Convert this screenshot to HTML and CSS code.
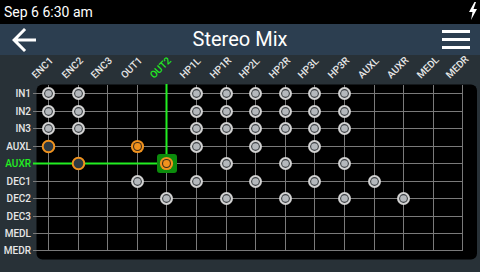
FILE: index.html
```html
<!DOCTYPE html>
<html>
<head>
<meta charset="utf-8">
<link rel="stylesheet" href="styles.css">
</head>
<body>
<div class="screen">
  <div class="status">
    <span class="clock">Sep 6 6:30 am</span>
    <svg class="bolt" viewBox="0 0 10 18" width="10" height="18"><polygon points="6.5,0 1,10 4.5,10 3,18 9,7 5.5,7 8,0" fill="#fff"/></svg>
  </div>
  <header class="topbar">
    <svg class="back" viewBox="4 4 16 16" width="24" height="24"><path d="M20 11H7.83l5.59-5.59L12 4l-8 8 8 8 1.41-1.41L7.83 13H20v-2z" fill="#fff"/></svg>
    <h1 class="title">Stereo Mix</h1>
    <div class="menu"><span></span><span></span><span></span></div>
  </header>
  <main class="content">
    <svg class="matrix" width="480" height="217" viewBox="0 55 480 217">
      <defs>
        <g id="dot">
          <circle r="6.5" class="d-out"/>
          <circle r="4.4" class="d-ring"/>
          <circle r="3.3" class="d-in"/>
        </g>
        <g id="ohollow">
          <circle r="5.8" class="o-hollow"/>
        </g>
        <g id="ofill">
          <circle r="6.6" class="o-out"/>
          <circle r="4.5" class="o-ring"/>
          <circle r="3.4" class="o-in"/>
        </g>
      </defs>
      <rect class="panel" x="36.5" y="84.5" width="440.5" height="175" rx="6"/>
      <g class="vlines">
        <line x1="48.5" y1="85" x2="48.5" y2="251"/>
        <line x1="78.5" y1="85" x2="78.5" y2="251"/>
        <line x1="107.5" y1="85" x2="107.5" y2="251"/>
        <line x1="137.5" y1="85" x2="137.5" y2="251"/>
        <line x1="166.5" y1="85" x2="166.5" y2="251"/>
        <line x1="196.5" y1="85" x2="196.5" y2="251"/>
        <line x1="226.5" y1="85" x2="226.5" y2="251"/>
        <line x1="255.5" y1="85" x2="255.5" y2="251"/>
        <line x1="285.5" y1="85" x2="285.5" y2="251"/>
        <line x1="314.5" y1="85" x2="314.5" y2="251"/>
        <line x1="344.5" y1="85" x2="344.5" y2="251"/>
        <line x1="374.5" y1="85" x2="374.5" y2="251"/>
        <line x1="403.5" y1="85" x2="403.5" y2="251"/>
        <line x1="433.5" y1="85" x2="433.5" y2="251"/>
        <line x1="462.5" y1="85" x2="462.5" y2="251"/>
      </g>
      <g class="hlines">
        <line x1="33" y1="93.5" x2="463" y2="93.5"/>
        <line x1="33" y1="111.5" x2="463" y2="111.5"/>
        <line x1="33" y1="128.5" x2="463" y2="128.5"/>
        <line x1="33" y1="146.5" x2="463" y2="146.5"/>
        <line x1="33" y1="163.5" x2="463" y2="163.5"/>
        <line x1="33" y1="181.5" x2="463" y2="181.5"/>
        <line x1="33" y1="198.5" x2="463" y2="198.5"/>
        <line x1="33" y1="216.5" x2="463" y2="216.5"/>
        <line x1="33" y1="233.5" x2="463" y2="233.5"/>
        <line x1="33" y1="250.5" x2="463" y2="250.5"/>
      </g>
      <line class="sel" x1="166.5" y1="84" x2="166.5" y2="155"/>
      <line class="sel" x1="33" y1="163.5" x2="158" y2="163.5"/>

      <g class="collabels">
        <text x="36" y="79" transform="rotate(-45 36 79)">ENC1</text>
        <text x="66" y="79" transform="rotate(-45 66 79)">ENC2</text>
        <text x="95" y="79" transform="rotate(-45 95 79)">ENC3</text>
        <text x="125" y="79" transform="rotate(-45 125 79)">OUT1</text>
        <text class="on" x="154" y="79" transform="rotate(-45 154 79)">OUT2</text>
        <text x="184" y="79" transform="rotate(-45 184 79)">HP1L</text>
        <text x="214" y="79" transform="rotate(-45 214 79)">HP1R</text>
        <text x="243" y="79" transform="rotate(-45 243 79)">HP2L</text>
        <text x="273" y="79" transform="rotate(-45 273 79)">HP2R</text>
        <text x="302" y="79" transform="rotate(-45 302 79)">HP3L</text>
        <text x="332" y="79" transform="rotate(-45 332 79)">HP3R</text>
        <text x="362" y="79" transform="rotate(-45 362 79)">AUXL</text>
        <text x="391" y="79" transform="rotate(-45 391 79)">AUXR</text>
        <text x="421" y="79" transform="rotate(-45 421 79)">MEDL</text>
        <text x="450" y="79" transform="rotate(-45 450 79)">MEDR</text>
      </g>
      <g class="rowlabels">
        <text x="31" y="97">IN1</text>
        <text x="31" y="115">IN2</text>
        <text x="31" y="132">IN3</text>
        <text x="31" y="150">AUXL</text>
        <text class="on" x="31" y="167">AUXR</text>
        <text x="31" y="185">DEC1</text>
        <text x="31" y="202">DEC2</text>
        <text x="31" y="220">DEC3</text>
        <text x="31" y="237">MEDL</text>
        <text x="31" y="254">MEDR</text>
      </g>

      <!-- IN1 -->
      <use href="#dot" x="48.5" y="93.5"/><use href="#dot" x="78.5" y="93.5"/>
      <use href="#dot" x="196.5" y="93.5"/><use href="#dot" x="226.5" y="93.5"/>
      <use href="#dot" x="255.5" y="93.5"/><use href="#dot" x="285.5" y="93.5"/>
      <use href="#dot" x="314.5" y="93.5"/><use href="#dot" x="344.5" y="93.5"/>
      <!-- IN2 -->
      <use href="#dot" x="48.5" y="111.5"/><use href="#dot" x="78.5" y="111.5"/>
      <use href="#dot" x="196.5" y="111.5"/><use href="#dot" x="226.5" y="111.5"/>
      <use href="#dot" x="255.5" y="111.5"/><use href="#dot" x="285.5" y="111.5"/>
      <use href="#dot" x="314.5" y="111.5"/><use href="#dot" x="344.5" y="111.5"/>
      <!-- IN3 -->
      <use href="#dot" x="48.5" y="128.5"/><use href="#dot" x="78.5" y="128.5"/>
      <use href="#dot" x="196.5" y="128.5"/><use href="#dot" x="226.5" y="128.5"/>
      <use href="#dot" x="255.5" y="128.5"/><use href="#dot" x="285.5" y="128.5"/>
      <use href="#dot" x="314.5" y="128.5"/><use href="#dot" x="344.5" y="128.5"/>
      <!-- AUXL -->
      <use href="#ohollow" x="48.5" y="146.5"/>
      <use href="#ofill" x="137.5" y="146.5"/>
      <use href="#dot" x="196.5" y="146.5"/><use href="#dot" x="255.5" y="146.5"/>
      <use href="#dot" x="314.5" y="146.5"/>
      <!-- AUXR -->
      <use href="#ohollow" x="78.5" y="163.5"/>
      <rect class="hl" x="157" y="154" width="20" height="19" rx="3"/>
      <use href="#ofill" x="166.5" y="163.5"/>
      <use href="#dot" x="226.5" y="163.5"/><use href="#dot" x="285.5" y="163.5"/>
      <use href="#dot" x="344.5" y="163.5"/>
      <!-- DEC1 -->
      <use href="#dot" x="137.5" y="181.5"/><use href="#dot" x="196.5" y="181.5"/>
      <use href="#dot" x="255.5" y="181.5"/><use href="#dot" x="314.5" y="181.5"/>
      <use href="#dot" x="374.5" y="181.5"/>
      <!-- DEC2 -->
      <use href="#dot" x="166.5" y="198.5"/><use href="#dot" x="226.5" y="198.5"/>
      <use href="#dot" x="285.5" y="198.5"/><use href="#dot" x="344.5" y="198.5"/>
      <use href="#dot" x="403.5" y="198.5"/>
    </svg>
  </main>
</div>
</body>
</html>
```

FILE: styles.css
```css
html, body {
  margin: 0;
  padding: 0;
  background: #283137;
}
.screen {
  width: 480px;
  height: 272px;
  overflow: hidden;
  font-family: Roboto, "Liberation Sans", sans-serif;
  color: #fff;
}
.status {
  height: 24px;
  background: #000;
  display: flex;
  align-items: center;
  justify-content: space-between;
  padding: 0 2px 0 4px;
}
.clock {
  font-size: 14px;
  line-height: 24px;
}
.bolt {
  display: block;
  margin-top: -2px;
}
.topbar {
  height: 31px;
  background: #2c3e50;
  display: grid;
  grid-template-columns: 48px 1fr 48px;
  align-items: center;
}
.back {
  display: block;
  margin-left: 12px;
}
.title {
  margin: 0;
  text-align: center;
  font-size: 20px;
  font-weight: 400;
  line-height: 31px;
}
.menu {
  justify-self: end;
  margin-right: 10px;
  display: flex;
  flex-direction: column;
  gap: 5px;
}
.menu span {
  display: block;
  width: 28px;
  height: 3px;
  background: #fff;
}
.content {
  height: 217px;
}
.matrix {
  display: block;
}
.panel {
  fill: #000;
}
.vlines line, .hlines line {
  stroke: #7a7a7a;
  stroke-width: 1;
}
.sel {
  stroke: #22ee22;
  stroke-width: 2;
}
.collabels text, .rowlabels text {
  font-family: Roboto, "Liberation Sans", sans-serif;
  font-size: 10px;
  font-weight: 500;
  fill: #e6e6e6;
}
.rowlabels text {
  text-anchor: end;
}
.collabels text.on, .rowlabels text.on {
  fill: #22ee22;
}
.d-out { fill: #d2d2d2; }
.d-ring { fill: #3c4044; }
.d-in { fill: #b4b8bc; }
.o-hollow {
  fill: #2e3a44;
  stroke: #f0921e;
  stroke-width: 2;
}
.o-out { fill: #f0921e; }
.o-ring { fill: #3a2a18; }
.o-in { fill: #f0921e; }
.hl { fill: #0c8c0c; }
```
